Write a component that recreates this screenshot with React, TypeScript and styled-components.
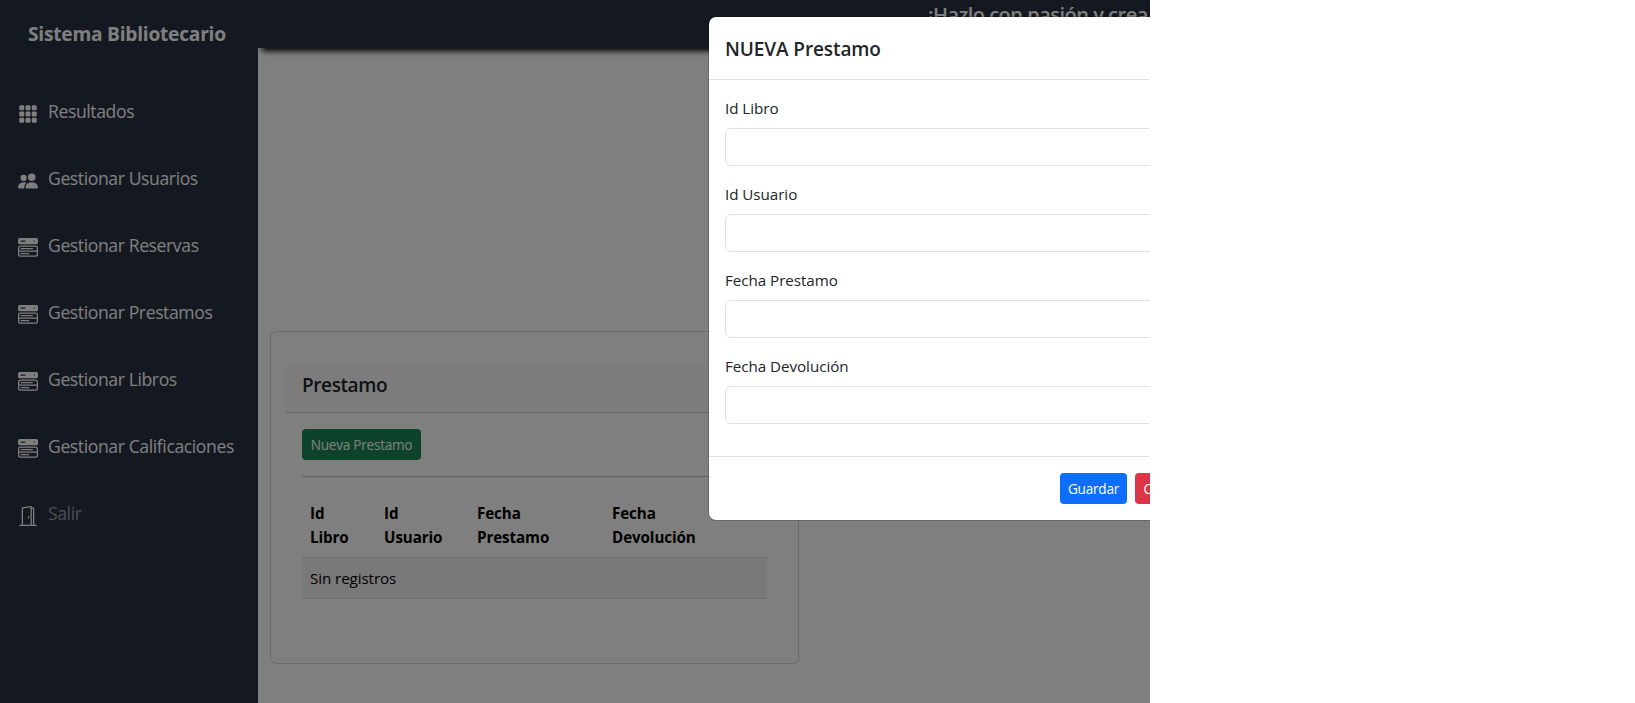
import React from "react";
import styled, { createGlobalStyle } from "styled-components";
import type { IconType } from "react-icons";
import {
  BsGrid3X3GapFill,
  BsPeopleFill,
  BsMenuButtonWideFill,
  BsDoorOpen,
} from "react-icons/bs";

const Global = createGlobalStyle`
  *, *::before, *::after { box-sizing: border-box; }
  body {
    margin: 0;
    background: #fff;
    color: #212529;
    font: 400 16px/24px "Open Sans", "Noto Sans", sans-serif;
  }
`;

const Screen = styled.div`
  position: relative;
  display: flex;
  width: 1150px;
  height: 703px;
  overflow: hidden;
  background: #fff;
`;

const Sidebar = styled.aside`
  flex: 0 0 258px;
  background: #283040;
  color: #fff;
`;

const Brand = styled.h1`
  margin: 0;
  padding: 19px 0 0 28px;
  height: 78px;
  font-size: 19.2px;
  line-height: 30px;
  font-weight: 700;
  letter-spacing: -0.25px;
  white-space: nowrap;
`;

const Menu = styled.nav`
  display: flex;
  flex-direction: column;
`;

const MenuLink = styled.a<{ $muted?: boolean }>`
  display: flex;
  align-items: center;
  gap: 10px;
  height: 67px;
  padding-left: 18px;
  font-size: 17.6px;
  letter-spacing: -0.4px;
  white-space: nowrap;
  color: #fff;

  svg {
    width: 20px;
    height: 20px;
    margin-top: 5px;
  }

  span {
    padding-bottom: 2px;
    color: ${(p) => (p.$muted ? "#9a9da3" : "#fff")};
  }
`;

const Main = styled.div`
  display: flex;
  flex-direction: column;
  flex: 1;
  min-width: 0;
`;

const Topbar = styled.header`
  height: 48px;
  padding: 0 0 0 670px;
  background: #283040;
  box-shadow: 5px 2px 6px 1px #000;
  clip-path: inset(0 0 -16px 0);
  color: #fff;
  font-size: 20px;
  line-height: 30px;
  font-weight: 600;
  letter-spacing: -0.5px;
  white-space: nowrap;
`;

const Panel = styled.section`
  width: 529px;
  height: 333px;
  margin: 283px 0 0 12px;
  padding: 32px 15px;
  border: 1px solid #d5d6d7;
  border-radius: 6px;
`;

const PanelHeader = styled.div`
  height: 49px;
  padding: 6px 16px;
  border-bottom: 1px solid #cfd0d2;
  border-radius: 6px 6px 0 0;
  background: #f8f8f8;
`;

const Title = styled.h5`
  margin: 0;
  font-size: 19px;
  line-height: 30px;
  font-weight: 600;
  letter-spacing: -0.4px;
`;

const PanelBody = styled.div`
  padding: 16px;
`;

const Button = styled.button<{ $tone: string; $width: number }>`
  width: ${(p) => p.$width}px;
  height: 31px;
  padding: 0;
  border: 0;
  border-radius: 4px;
  background: ${(p) => p.$tone};
  color: #fff;
  font: 400 13.6px/21px "Open Sans", "Noto Sans", sans-serif;
  letter-spacing: -0.25px;
  white-space: nowrap;
`;

const Table = styled.table`
  width: 465px;
  margin-top: 16px;
  border-top: 1px solid #c4c5c6;
  padding-top: 16px;
  border-spacing: 0;
  table-layout: fixed;
  color: #000;
  letter-spacing: -0.1px;
  font-size: 15.2px;
`;

const HeadCell = styled.th`
  padding: 8px;
  border-bottom: 1px solid #dee2e6;
  font-weight: 700;
  text-align: left;
`;

const Cell = styled.td`
  padding: 8px;
  border-bottom: 1px solid #dee2e6;
  background: #f2f2f2;
`;

const Backdrop = styled.div`
  position: absolute;
  inset: 0;
  background: rgba(0, 0, 0, 0.5);
`;

const Dialog = styled.div`
  position: absolute;
  top: 16px;
  left: 708px;
  width: 500px;
  border: 1px solid rgba(0, 0, 0, 0.175);
  border-radius: 8px;
  background: #fff;
  background-clip: padding-box;
`;

const DialogHeader = styled.div`
  padding: 17px 16px 15px;
  border-bottom: 1px solid #dee2e6;

  ${Title} {
    letter-spacing: -0.1px;
  }
`;

const DialogBody = styled.div`
  padding: 16px 16px 0;
`;

const Field = styled.label`
  display: flex;
  flex-direction: column;
  gap: 8px;
  padding-bottom: 16px;
  font-size: 15.2px;
  letter-spacing: -0.05px;
`;

const Input = styled.input`
  height: 38px;
  border: 1px solid #dee2e6;
  border-radius: 6px;
  background: #fff;
`;

const DialogFooter = styled.div`
  display: flex;
  justify-content: flex-end;
  gap: 8px;
  margin-top: 16px;
  padding: 16px;
  border-top: 1px solid #dee2e6;
`;

const links: { label: string; icon: IconType; muted?: boolean }[] = [
  { label: "Resultados", icon: BsGrid3X3GapFill },
  { label: "Gestionar Usuarios", icon: BsPeopleFill },
  { label: "Gestionar Reservas", icon: BsMenuButtonWideFill },
  { label: "Gestionar Prestamos", icon: BsMenuButtonWideFill },
  { label: "Gestionar Libros", icon: BsMenuButtonWideFill },
  { label: "Gestionar Calificaciones", icon: BsMenuButtonWideFill },
  { label: "Salir", icon: BsDoorOpen, muted: true },
];

const fields = ["Id Libro", "Id Usuario", "Fecha Prestamo", "Fecha Devolución"];
const columnWidths = [74, 93, 135, 134, 29];

export default function App() {
  return (
    <>
      <Global />
      <Screen>
        <Sidebar>
          <Brand>Sistema Bibliotecario</Brand>
          <Menu>
            {links.map(({ label, icon: Icon, muted }) => (
              <MenuLink key={label} $muted={muted}>
                <Icon />
                <span>{label}</span>
              </MenuLink>
            ))}
          </Menu>
        </Sidebar>
        <Main>
          <Topbar>¡Hazlo con pasión y crea</Topbar>
          <Panel>
            <PanelHeader>
              <Title>Prestamo</Title>
            </PanelHeader>
            <PanelBody>
              <Button $tone="#198754" $width={119}>Nueva Prestamo</Button>
              <Table>
                <colgroup>
                  {columnWidths.map((w) => (
                    <col key={w} width={w} />
                  ))}
                </colgroup>
                <thead>
                  <tr>
                    {fields.map((f) => {
                      const [first, second] = f.split(" ");
                      return (
                        <HeadCell key={f}>
                          {first}
                          <br />
                          {second}
                        </HeadCell>
                      );
                    })}
                    <HeadCell />
                  </tr>
                </thead>
                <tbody>
                  <tr>
                    <Cell colSpan={5}>Sin registros</Cell>
                  </tr>
                </tbody>
              </Table>
            </PanelBody>
          </Panel>
        </Main>
        <Backdrop />
        <Dialog role="dialog">
          <DialogHeader>
            <Title>NUEVA Prestamo</Title>
          </DialogHeader>
          <DialogBody>
            {fields.map((f) => (
              <Field key={f}>
                {f}
                <Input />
              </Field>
            ))}
          </DialogBody>
          <DialogFooter>
            <Button $tone="#0d6efd" $width={67}>Guardar</Button>
            <Button $tone="#dc3545" $width={56}>Cerrar</Button>
          </DialogFooter>
        </Dialog>
      </Screen>
    </>
  );
}
